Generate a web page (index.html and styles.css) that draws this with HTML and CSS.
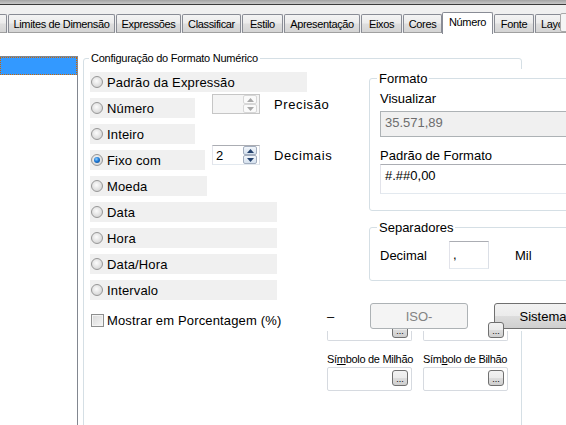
FILE: index.html
```html
<!DOCTYPE html>
<html lang="pt">
<head>
<meta charset="utf-8">
<title>Número</title>
<link rel="stylesheet" href="styles.css">
</head>
<body>
<div class="chrome"></div>
<div class="tabbar">
  <div class="tab tab-cut"></div>
  <div class="tab">Limites de Dimensão</div>
  <div class="tab">Expressões</div>
  <div class="tab">Classificar</div>
  <div class="tab">Estilo</div>
  <div class="tab">Apresentação</div>
  <div class="tab">Eixos</div>
  <div class="tab">Cores</div>
  <div class="tab tab-on">Número</div>
  <div class="tab">Fonte</div>
  <div class="tab">Layout</div>
  <div class="tab-scroll"></div>
</div>
<div class="page">
  <div class="list"><div class="list-item"></div></div>
  <fieldset class="group cfg">
    <legend class="cfg-title">Configuração do Formato Numérico</legend>
    <div class="cfg-body">
      <div class="opts">
        <div class="row"><div class="opt w-expr"><span class="radio"></span>Padrão da Expressão</div></div>
        <div class="row">
          <div class="opt w-num"><span class="radio"></span>Número</div>
          <div class="spinwrap spinwrap-num">
            <div class="spin spin-off">
              <span class="spin-val"></span>
              <span class="spin-btns">
                <span class="spin-btn"><svg width="7" height="4" viewBox="0 0 7 4"><path d="M0 4 L3.5 0 L7 4 Z"/></svg></span>
                <span class="spin-btn"><svg width="7" height="4" viewBox="0 0 7 4"><path d="M0 0 L7 0 L3.5 4 Z"/></svg></span>
              </span>
            </div>
            <span class="spin-label">Precisão</span>
          </div>
        </div>
        <div class="row"><div class="opt w-int"><span class="radio"></span>Inteiro</div></div>
        <div class="row">
          <div class="opt w-fix"><span class="radio radio-on"></span>Fixo com</div>
          <div class="spinwrap spinwrap-fix">
            <div class="spin">
              <span class="spin-val">2</span>
              <span class="spin-btns">
                <span class="spin-btn"><svg width="7" height="4" viewBox="0 0 7 4"><path d="M0 4 L3.5 0 L7 4 Z"/></svg></span>
                <span class="spin-btn"><svg width="7" height="4" viewBox="0 0 7 4"><path d="M0 0 L7 0 L3.5 4 Z"/></svg></span>
              </span>
            </div>
            <span class="spin-label">Decimais</span>
          </div>
        </div>
        <div class="row"><div class="opt w-moeda"><span class="radio"></span>Moeda</div></div>
        <div class="row"><div class="opt w-wide"><span class="radio"></span>Data</div></div>
        <div class="row"><div class="opt w-wide"><span class="radio"></span>Hora</div></div>
        <div class="row"><div class="opt w-wide"><span class="radio"></span>Data/Hora</div></div>
        <div class="row"><div class="opt w-wide"><span class="radio"></span>Intervalo</div></div>
        <div class="row row-check"><div class="opt opt-plain"><span class="check"></span>Mostrar em Porcentagem (%)</div></div>
      </div>

      <div class="side">
        <div class="panel">
          <fieldset class="group fmt">
            <legend class="grp-title">Formato</legend>
            <div class="fmt-label">Visualizar</div>
            <div class="field field-ro">35.571,89</div>
            <div class="fmt-label fmt-label-2">Padrão de Formato</div>
            <div class="field field-pattern">#.##0,00</div>
          </fieldset>
          <fieldset class="group sep">
            <legend class="grp-title">Separadores</legend>
            <div class="sep-row">
              <span class="sep-label">Decimal</span>
              <span class="sep-input">,</span>
              <span class="sep-mil">Mil</span>
            </div>
          </fieldset>
          <div class="btnrow">
            <span class="dash">–</span>
            <button class="btn btn-off" type="button">ISO-</button>
            <button class="btn btn-sys" type="button">Sistema</button>
          </div>
        </div>
        <div class="syms-top">
          <div class="field-cut"><span class="dots">...</span></div>
          <div class="field-cut"><span class="dots">...</span></div>
        </div>
        <div class="syms">
          <div class="sym">
            <div class="sym-label">Sí<span class="u">m</span>bolo de Milhão</div>
            <div class="sym-field"><span class="dots">...</span></div>
          </div>
          <div class="sym">
            <div class="sym-label">Sím<span class="u">b</span>olo de Bilhão</div>
            <div class="sym-field"><span class="dots">...</span></div>
          </div>
        </div>
      </div>
    </div>
  </fieldset>
</div>
</body>
</html>
```

FILE: styles.css
```css
* { box-sizing: border-box; }

html, body { margin: 0; padding: 0; }

body {
  width: 566px;
  height: 425px;
  overflow: hidden;
  background: #fff;
  color: #000;
  font-family: "Liberation Sans", Arial, sans-serif;
  font-size: 13px;
}

/* window chrome + tab strip */
.chrome {
  height: 5px;
  background: linear-gradient(#a3a3a3, #c8c8c8);
  border-bottom: 1px solid #3b3b3b;
}

.tabbar {
  position: relative;
  display: flex;
  align-items: flex-end;
  height: 28px;
  background: #f0f0f0;
  font-size: 11px;
  letter-spacing: -0.35px;
}

.tab {
  flex: none;
  height: 19px;
  margin-left: 1px;
  padding-top: 3px;
  line-height: 13px;
  text-align: center;
  white-space: nowrap;
  overflow: hidden;
  border: 1px solid #898c95;
  border-bottom-color: #a0a0a0;
  border-radius: 2px 2px 0 0;
  background: linear-gradient(#f4f4f4, #ececec 45%, #dedede 55%, #d4d4d4);
}

.tab:nth-child(1) { width: 7px; margin-left: 0; border-left: none; border-radius: 0 2px 0 0; }
.tab:nth-child(2) { width: 107px; }
.tab:nth-child(3) { width: 65px; }
.tab:nth-child(4) { width: 59px; }
.tab:nth-child(5) { width: 41px; }
.tab:nth-child(6) { width: 76px; }
.tab:nth-child(7) { width: 41px; }
.tab:nth-child(8) { width: 39px; }
.tab:nth-child(9) { width: 51px; }
.tab:nth-child(10) { width: 40px; }
.tab:nth-child(11) { width: 45px; text-align: left; padding-left: 5px; }

.tab-on {
  height: 22px;
  margin-left: 0;
  margin-bottom: -1px;
  padding-top: 3px;
  background: #fff;
  border-bottom: none;
}

.tab-scroll {
  position: absolute;
  left: 560px;
  top: 8px;
  width: 20px;
  height: 19px;
  border: 1px solid #a9a9a9;
  border-radius: 2px;
  background: #f5f5f5;
}

/* page body */
.page {
  display: flex;
  align-items: flex-start;
  height: 392px;
}

.list {
  flex: none;
  width: 78px;
  height: 380px;
  margin-top: 23px;
  border-top: 1px solid #828790;
  border-right: 1px solid #828790;
}

.list-item {
  height: 18px;
  background: #3399ff;
  border: 1px dotted #cc6600;
}

.group {
  margin: 0;
  padding: 0;
  min-width: 0;
  border: 1px solid #d5dfe5;
  border-radius: 3px;
}

.cfg {
  flex: none;
  width: 439px;
  height: 380px;
  margin: 18px 0 0 5px;
  padding: 0 0 0 6px;
}

.cfg-title {
  margin-left: -1px;
  padding: 0 2px;
  font-size: 11px;
  line-height: 14px;
  letter-spacing: -0.25px;
}

.cfg-body {
  display: grid;
  grid-template-columns: 237px 260px;
  align-items: start;
}

/* option list */
.opts {
  position: relative;
  z-index: 1;
  display: flex;
  flex-direction: column;
  gap: 6px;
  margin-top: 7px;
}

.row {
  display: flex;
  height: 20px;
}

.opt {
  flex: none;
  display: flex;
  align-items: center;
  height: 20px;
  padding-left: 1px;
  background: #f0f0f0;
  letter-spacing: 0.15px;
  white-space: nowrap;
}

.w-expr { width: 217px; }
.w-num { width: 105px; }
.w-int { width: 105px; }
.w-fix { width: 115px; }
.w-moeda { width: 117px; }
.w-wide { width: 187px; }

.opt-plain { background: none; }
.row-check { margin-top: 4px; }

.radio {
  flex: none;
  width: 12px;
  height: 12px;
  margin-right: 4px;
  border-radius: 50%;
  border: 1px solid #979797;
  background: radial-gradient(circle at 45% 40%, #fcfcfc 0, #e6e6e6 45%, #c9c9c9 100%);
}

.radio-on {
  display: flex;
  align-items: center;
  justify-content: center;
}

.radio-on::after {
  content: "";
  width: 6px;
  height: 6px;
  border-radius: 50%;
  background: radial-gradient(circle at 40% 35%, #8fd0ff 0, #1f7ad6 45%, #0a3f7e 100%);
}

.check {
  flex: none;
  width: 13px;
  height: 13px;
  margin-right: 3px;
  border: 1px solid #8e8f8f;
  background: linear-gradient(135deg, #d8d8d8, #f6f6f6);
  box-shadow: inset 0 0 0 1px #f4f4f4;
}

/* spinners */
.spinwrap {
  flex: none;
  display: flex;
  align-items: center;
  height: 20px;
}

.spinwrap-num { margin: -4px 0 0 17px; }
.spinwrap-fix { margin: -5px 0 0 7px; }

.spin {
  display: flex;
  align-items: center;
  justify-content: space-between;
  width: 48px;
  height: 20px;
  padding: 0 2px 0 3px;
  border: 1px solid;
  border-color: #abadb3 #dbdfe6 #e3e9ef #e2e3ea;
  background: #fff;
}

.spin-off {
  background: #f4f4f4;
  border-color: #c6c6c6;
}

.spin-btns {
  display: flex;
  flex-direction: column;
}

.spin-btn {
  display: flex;
  align-items: center;
  justify-content: center;
  width: 14px;
  height: 9px;
  border: 1px solid #a3aebf;
  border-radius: 2px;
  background: linear-gradient(#f2f6fb, #d5e1ee);
}

.spin-btn svg { display: block; fill: #24426e; }

.spin-off .spin-btn {
  border-color: #d7d7d7;
  background: #fafafa;
}

.spin-off .spin-btn svg { fill: #a8a8a8; }

.spin-label { margin-left: 14px; letter-spacing: 0.6px; white-space: nowrap; }

/* right side */
.panel {
  display: flex;
  flex-direction: column;
  align-items: flex-start;
  width: 260px;
  height: 262px;
  margin-top: 4px;
  background: #fff;
}

.grp-title {
  margin-left: -3px;
  padding: 0 2px;
  font-size: 13px;
  line-height: 15px;
}

.fmt {
  width: 250px;
  height: 140px;
  margin: 2px 0 0 42px;
  padding: 0 0 0 10px;
}

.fmt-label {
  line-height: 15px;
  margin-top: 5px;
}

.fmt-label-2 { margin-top: 11px; }

.field {
  height: 26px;
  margin-top: 5px;
  padding: 3px 4px;
  line-height: 15px;
  border: 1px solid;
  border-color: #abadb3 #dbdfe6 #e3e9ef #e2e3ea;
  background: #fff;
}

.field-ro {
  background: #f0f0f0;
  color: #6d6d6d;
  border-color: #adb2b5;
}

.field-pattern {
  height: 30px;
  margin-top: 1px;
}

.sep {
  width: 250px;
  height: 61px;
  margin: 9px 0 0 42px;
  padding: 0 0 0 10px;
}

.sep-row {
  display: flex;
  align-items: center;
  height: 28px;
  margin-top: 6px;
}

.sep-label { width: 69px; }

.sep-input {
  width: 40px;
  height: 28px;
  padding: 5px 3px;
  line-height: 15px;
  border: 1px solid;
  border-color: #abadb3 #dbdfe6 #e3e9ef #e2e3ea;
}

.sep-mil { margin-left: 26px; }

.btnrow {
  display: flex;
  align-items: center;
  height: 26px;
  margin-top: 22px;
}

.dash { width: 43px; }

.btn {
  flex: none;
  width: 98px;
  height: 26px;
  padding: 0;
  font: inherit;
  font-size: 13px;
  color: #000;
  border: 1px solid #707070;
  border-radius: 3px;
  background: linear-gradient(#f2f2f2, #ebebeb 50%, #dddddd 50%, #cfcfcf);
}

.btn-off {
  position: relative;
  z-index: 2;
  color: #838383;
  border-color: #adb2b5;
  background: #f4f4f4;
}

.btn-sys { margin-left: 26px; }

/* symbol fields */
.syms-top {
  display: flex;
  gap: 11px;
}

.field-cut {
  display: flex;
  align-items: flex-end;
  justify-content: flex-end;
  width: 85px;
  height: 10px;
  padding: 0 3px 2px 0;
  border: 1px solid #d6dae0;
  border-top: none;
  border-radius: 0 0 2px 2px;
}

.dots {
  position: relative;
  z-index: 1;
  flex: none;
  display: flex;
  align-items: flex-end;
  justify-content: center;
  width: 16px;
  height: 16px;
  padding-bottom: 1px;
  font-size: 9px;
  line-height: 9px;
  letter-spacing: 0;
  border: 1px solid #707070;
  border-radius: 3px;
  background: linear-gradient(#f2f2f2, #ebebeb 50%, #dddddd 50%, #cfcfcf);
}

.syms {
  display: flex;
  gap: 11px;
  margin-top: 12px;
}

.sym { width: 85px; }

.sym-label {
  font-size: 11px;
  line-height: 13px;
  letter-spacing: -0.3px;
  white-space: nowrap;
}

.u { text-decoration: underline; }

.sym-field {
  display: flex;
  justify-content: flex-end;
  height: 24px;
  margin-top: 1px;
  padding: 2px 3px 0 0;
  border: 1px solid #d6dae0;
  border-radius: 2px;
}
```
